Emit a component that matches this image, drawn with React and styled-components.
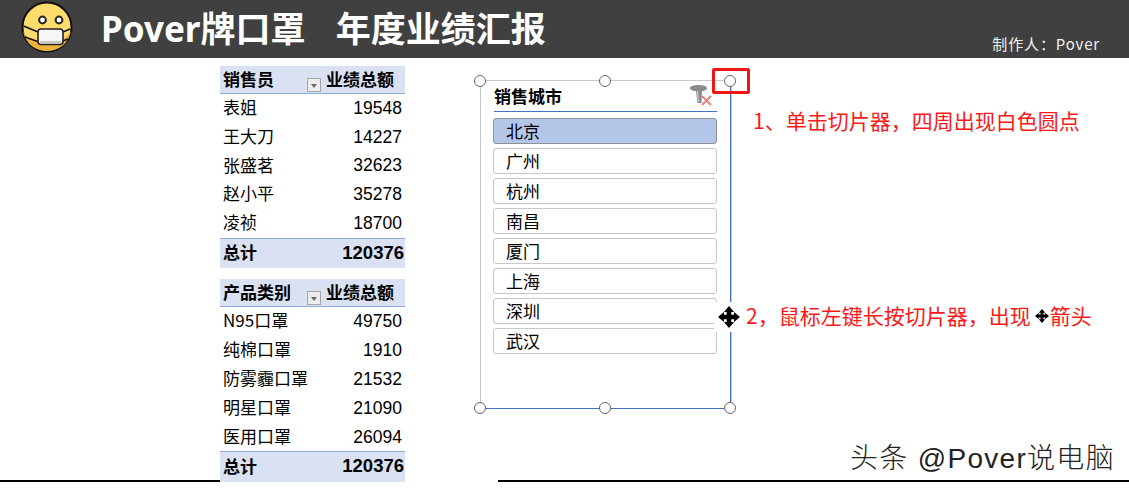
import styled, { createGlobalStyle } from 'styled-components';

const sellers = [
  ['表姐', 19548],
  ['王大刀', 14227],
  ['张盛茗', 32623],
  ['赵小平', 35278],
  ['凌祯', 18700],
];

const products = [
  ['N95口罩', 49750],
  ['纯棉口罩', 1910],
  ['防雾霾口罩', 21532],
  ['明星口罩', 21090],
  ['医用口罩', 26094],
];

const cities = ['北京', '广州', '杭州', '南昌', '厦门', '上海', '深圳', '武汉'];

const FaceIcon = () => (
  <svg width='52' height='52' viewBox='0 0 52 52'>
    <circle cx='26' cy='26' r='24.5' fill='#ffdc6b' stroke='#111' strokeWidth='2' />
    <path d='M2 30 C10 46 40 46 50 30 C47 44 37 50 26 50 C15 50 5 44 2 30Z' fill='#eeb23f' />
    <path d='M2.5 25 L17 31 M4 36 L18 41 M42 31 L49 28 M42 40 L47 38' stroke='#111' strokeWidth='1.6' />
    <circle cx='21.5' cy='19' r='3.4' fill='#fff' stroke='#222' strokeWidth='2' />
    <circle cx='38' cy='19' r='3.4' fill='#fff' stroke='#222' strokeWidth='2' />
    <rect x='17' y='28' width='25' height='15.5' rx='3' fill='#f6f6f6' stroke='#222' strokeWidth='1.6' />
    <path d='M19 41 H40' stroke='#c8c8c8' strokeWidth='2' />
  </svg>
);

const MoveIcon = ({ size }) => (
  <svg width={size} height={size} viewBox='0 0 24 24' fill='#000'>
    <path d='M12 0 L17.5 6.5 H14.5 V9.5 H17.5 V6.5 L24 12 L17.5 17.5 V14.5 H14.5 V17.5 H17.5 L12 24 L6.5 17.5 H9.5 V14.5 H6.5 V17.5 L0 12 L6.5 6.5 V9.5 H9.5 V6.5 H6.5Z' />
  </svg>
);

const ClearFilterIcon = () => (
  <svg width='22' height='22' viewBox='0 0 22 22'>
    <path d='M0 3 C0 1 4 0 8.5 0 C13 0 17 1 17 3 C17 5 14 6 12 6 L11.5 18 H7.5 L6 6 C3 6 0 5 0 3Z' fill='#8a8a8a' />
    <path d='M7.5 6 L8.5 17' stroke='#c4c4c4' strokeWidth='1.4' />
    <path d='M12 11 L21 20 M21 11 L12 20' stroke='#e88080' strokeWidth='2' />
  </svg>
);

const PivotTable = ({ label, rows, total }) => (
  <Table>
    <HeadRow>
      <HeadName>{label}</HeadName>
      <FilterButton />
      <HeadValue>业绩总额</HeadValue>
    </HeadRow>
    {rows.map(([name, value]) => (
      <Row key={name}>
        <RowName>{name}</RowName>
        <Num>{value}</Num>
      </Row>
    ))}
    <TotalRow>
      <RowName>总计</RowName>
      <TotalNum>{total}</TotalNum>
    </TotalRow>
  </Table>
);

const App = () => {
  return (
    <Page>
      <GlobalStyle />
      <Header>
        <FaceIcon />
        <Title>Pover牌口罩&nbsp;&nbsp;&nbsp;年度业绩汇报</Title>
        <Author>制作人：Pover</Author>
      </Header>

      <Body>
        <Tables>
          <PivotTable label='销售员' rows={sellers} total={120376} />
          <PivotTable label='产品类别' rows={products} total={120376} />
        </Tables>

        <Slicer>
          <SlicerTitle>
            销售城市
            <ClearFilterIcon />
          </SlicerTitle>
          <CityList>
            {cities.map((city, i) => (
              <City key={city} $active={i === 0}>{city}</City>
            ))}
          </CityList>
          <Handle $x={0} $y={0} />
          <Handle $x={50} $y={0} />
          <Handle $x={100} $y={0} />
          <Handle $x={0} $y={100} />
          <Handle $x={50} $y={100} />
          <Handle $x={100} $y={100} />
          <HandleMark />
          <MoveBadge>
            <MoveIcon size={22} />
          </MoveBadge>
        </Slicer>

        <Notes>
          <NoteOne>1、单击切片器，四周出现白色圆点</NoteOne>
          <NoteTwo>
            2，鼠标左键长按切片器，出现
            <NoteIcon>
              <MoveIcon size={14} />
            </NoteIcon>
            箭头
          </NoteTwo>
        </Notes>

        <RuleLeft />
        <RuleRight />
        <Watermark>头条 @Pover说电脑</Watermark>
      </Body>
    </Page>
  );
};

// Styles
const GlobalStyle = createGlobalStyle`
  html, body {
    margin: 0;
    background: #fff;
    overflow: hidden;
  }
`;

const Page = styled.div`
  width: 1129px;
  height: 488px;
  font-family: 'Noto Sans CJK SC', 'Liberation Sans', sans-serif;
  color: #000;
`;

const Header = styled.header`
  height: 58px;
  background: #404040;
  display: flex;
  align-items: flex-start;
  padding: 1px 29px 1px 21px;
  box-sizing: border-box;
`;

const Title = styled.h1`
  margin: 0 0 0 28px;
  font-family: 'Noto Sans', 'Noto Sans CJK SC', sans-serif;
  font-size: 35px;
  word-spacing: 1px;
  line-height: 56px;
  font-weight: 700;
  color: #fff;
  white-space: nowrap;
`;

const Author = styled.div`
  margin-left: auto;
  align-self: flex-end;
  font-size: 15px;
  letter-spacing: 0.85px;
  line-height: 26px;
  color: #f2f2f2;
`;

const Body = styled.main`
  position: relative;
  height: 430px;
  display: flex;
  align-items: flex-start;
  padding: 8px 0 0 220px;
  box-sizing: border-box;
`;

const Tables = styled.div`
  position: relative;
  z-index: 1;
  width: 185px;
  display: flex;
  flex-direction: column;
  gap: 11px;
`;

const Table = styled.div`
  font-size: 17px;
`;

const HeadRow = styled.div`
  height: 28px;
  box-sizing: border-box;
  display: flex;
  align-items: center;
  padding: 0 11px 0 3px;
  background: #d9e1f2;
  border-bottom: 1px solid #8ea9db;
  font-weight: 700;
`;

const HeadName = styled.span`
  flex: 1;
  margin-bottom: 3px;
`;

const FilterButton = styled.span`
  width: 14px;
  height: 14px;
  margin: 11px 5px 0 0;
  box-sizing: border-box;
  background: #ececec;
  border: 1px solid #a6a6a6;
  position: relative;

  &::after {
    content: '';
    position: absolute;
    left: 3px;
    top: 5px;
    border: 3px solid transparent;
    border-top: 4px solid #666;
    border-bottom: 0;
  }
`;

const HeadValue = styled.span`
  margin-bottom: 3px;
`;

const Row = styled.div`
  height: 28.8px;
  display: flex;
  align-items: center;
  justify-content: space-between;
  padding: 0 3px;
`;

const RowName = styled.span`
  margin-bottom: 4px;
`;

const TotalRow = styled(Row)`
  height: 30.5px;
  box-sizing: border-box;
  padding-right: 1px;
  background: #d9e1f2;
  border-top: 1px solid #8ea9db;
  font-weight: 700;
`;

const Num = styled.span`
  font-family: 'Liberation Sans', sans-serif;
  font-size: 17.5px;
`;

const TotalNum = styled(Num)`
  font-size: 18.5px;
  margin-bottom: 2px;
`;

const Slicer = styled.section`
  position: relative;
  width: 252px;
  height: 329px;
  box-sizing: border-box;
  margin: 14px 0 0 75px;
  padding: 0 14px 0 12px;
  border: 1px solid #c8c8c8;
  border-bottom: 1px solid #4472c4;
  box-shadow: inset -1px 0 0 #4472c4;
`;

const SlicerTitle = styled.h2`
  margin: 0 0 6px 1px;
  height: 31px;
  box-sizing: border-box;
  padding-bottom: 2px;
  display: flex;
  align-items: center;
  justify-content: space-between;
  border-bottom: 1px solid #4472c4;
  font-size: 17px;
  line-height: 29px;
  font-weight: 700;

  svg {
    margin: 2px 5px 0 0;
  }
`;

const CityList = styled.div`
  display: flex;
  flex-direction: column;
  gap: 4px;
`;

const City = styled.div`
  height: 26px;
  box-sizing: border-box;
  padding-left: 12px;
  font-size: 17px;
  line-height: 24px;
  border: 1px solid ${({ $active }) => ($active ? '#8f9296' : '#c8c8c8')};
  border-radius: 3px;
  background: ${({ $active }) => ($active ? '#b4c6e7' : '#fff')};
`;

const Handle = styled.span`
  position: absolute;
  z-index: 2;
  left: ${({ $x }) => $x}%;
  top: ${({ $y }) => $y}%;
  width: 12px;
  height: 12px;
  transform: translate(calc(-50% - 1px), -50%);
  box-sizing: border-box;
  border: 1px solid #666;
  border-radius: 50%;
  background: #fff;
`;

const HandleMark = styled.span`
  position: absolute;
  z-index: 3;
  right: -19px;
  top: -13px;
  width: 38px;
  height: 26px;
  box-sizing: border-box;
  border: 3px solid #f01414;
  border-radius: 2px;
`;

const MoveBadge = styled.span`
  position: absolute;
  z-index: 3;
  right: -13px;
  top: 221px;
  width: 30px;
  height: 30px;
  display: flex;
  align-items: center;
  justify-content: center;
  background: #fff;
`;

const Notes = styled.div`
  margin-left: 14px;
  color: #fb1818;
  font-size: 21px;
  white-space: nowrap;
`;

const NoteOne = styled.p`
  margin: 40px 0 0 7px;
  line-height: 28px;
`;

const NoteTwo = styled.p`
  margin: 167px 0 0 0;
  line-height: 28px;
  display: flex;
  align-items: center;
`;

const NoteIcon = styled.span`
  display: flex;
  margin: 2px 1px 0 4px;
`;

const RuleLeft = styled.div`
  position: absolute;
  left: 0;
  bottom: 6px;
  width: 220px;
  height: 2px;
  background: #000;
`;

const RuleRight = styled(RuleLeft)`
  left: 498px;
  width: 631px;
`;

const Watermark = styled.div`
  position: absolute;
  left: 850px;
  top: 383px;
  font-family: 'Liberation Sans', 'Noto Sans CJK SC', sans-serif;
  font-size: 28px;
  letter-spacing: 1.3px;
  line-height: 36px;
  font-weight: 300;
  color: #222;
  white-space: nowrap;
`;

export default App;
